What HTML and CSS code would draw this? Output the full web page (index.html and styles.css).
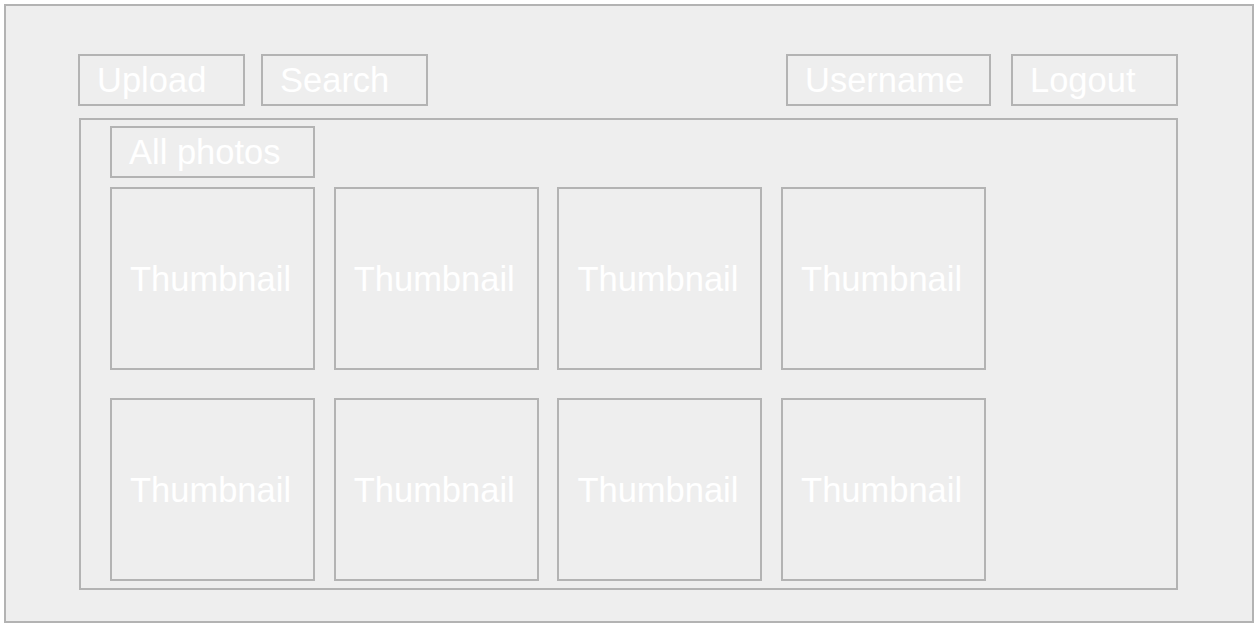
FILE: index.html
```html
<!DOCTYPE html>
<html>
<head>
<meta charset="utf-8">
<link rel="stylesheet" href="styles.css">
</head>
<body>
<div class="frame">
  <div class="header">
    <div class="group">
      <div class="box btn">Upload</div>
      <div class="box btn">Search</div>
    </div>
    <div class="group right">
      <div class="box btn wide">Username</div>
      <div class="box btn">Logout</div>
    </div>
  </div>
  <div class="panel">
    <div class="box title">All photos</div>
    <div class="grid">
      <div class="box thumb">Thumbnail</div>
      <div class="box thumb">Thumbnail</div>
      <div class="box thumb">Thumbnail</div>
      <div class="box thumb">Thumbnail</div>
      <div class="box thumb">Thumbnail</div>
      <div class="box thumb">Thumbnail</div>
      <div class="box thumb">Thumbnail</div>
      <div class="box thumb">Thumbnail</div>
    </div>
  </div>
</div>
</body>
</html>
```

FILE: styles.css
```css
* { box-sizing: border-box; }
html, body { margin: 0; padding: 0; background: #ffffff; }
body { font-family: "Liberation Sans", Arial, sans-serif; }

.frame {
  margin: 4px 0 0 4px;
  width: 1250px;
  height: 619px;
  border: 2px solid #b3b3b3;
  background: #eeeeee;
  padding: 48px 74px 0 72px;
}

.header {
  display: flex;
  justify-content: space-between;
  height: 52px;
  margin-bottom: 12px;
}

.group { display: flex; gap: 16px; }
.group.right { gap: 20px; }

.box {
  border: 2px solid #b3b3b3;
  color: #ffffff;
  font-size: 34.5px;
  display: flex;
  align-items: center;
  padding-left: 17px;
  padding-top: 1px;
  white-space: nowrap;
}

.btn { width: 167px; height: 52px; }
.btn.wide { width: 205px; }

.panel {
  margin-left: 1px;
  width: 1099px;
  height: 472px;
  border: 2px solid #b3b3b3;
  padding: 6px 0 0 29px;
}

.title { width: 205px; height: 52px; margin-bottom: 9px; }

.grid {
  display: grid;
  grid-template-columns: repeat(4, 205px);
  grid-auto-rows: 183px;
  column-gap: 18.7px;
  row-gap: 28px;
}

.thumb { padding-left: 18px; }
```
